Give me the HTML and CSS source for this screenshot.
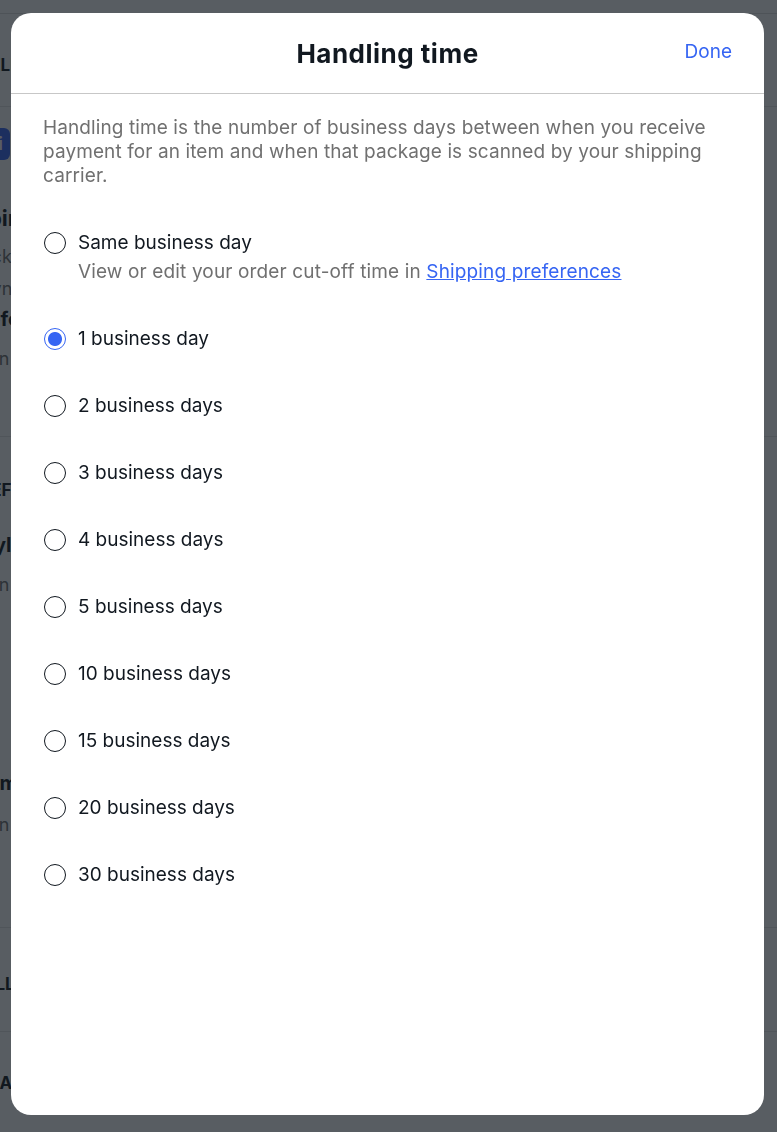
FILE: index.html
```html
<!DOCTYPE html>
<html lang="en">
<head>
<meta charset="utf-8">
<title>Handling time</title>
<link rel="stylesheet" href="styles.css">
</head>
<body>
<div class="page">
  <header class="page-header"></header>
  <section class="bg-section bg-top">
    <h2 class="bg-heading">DELIVERY</h2>
  </section>
  <section class="bg-section bg-first">
    <span class="bg-badge">i</span>
    <h3 class="bg-title bg-t1">Shipping</h3>
    <p class="bg-text bg-t2">Pack</p>
    <p class="bg-text bg-t3">Sync</p>
    <p class="bg-title2 bg-t4">Prefe</p>
    <p class="bg-text bg-t5">In</p>
  </section>
  <section class="bg-section bg-second">
    <h2 class="bg-heading">PREF</h2>
    <p class="bg-title2 bg-t6">Payl</p>
    <p class="bg-text bg-t7">In</p>
    <p class="bg-title2 bg-t8">Im</p>
    <p class="bg-text bg-t9">In</p>
  </section>
  <section class="bg-section bg-third">
    <h2 class="bg-heading">SELL</h2>
  </section>
  <section class="bg-section bg-fourth">
    <h2 class="bg-heading">DA</h2>
  </section>
</div>

<div class="overlay"></div>

<div class="dialog" role="dialog" aria-labelledby="dlg-title">
  <div class="dialog-header">
    <h1 id="dlg-title" class="dialog-title">Handling time</h1>
    <button class="done-btn" type="button">Done</button>
  </div>
  <div class="dialog-body">
    <p class="intro">Handling time is the number of business days between when you receive payment for an item and when that package is scanned by your shipping carrier.</p>
    <div class="options">
      <label class="option">
        <input type="radio" name="ht" class="radio">
        <span class="opt-text">
          <span class="opt-label">Same business day</span>
          <span class="opt-sub">View or edit your order cut-off time in <a href="#" class="link">Shipping preferences</a></span>
        </span>
      </label>
      <label class="option">
        <input type="radio" name="ht" class="radio" checked>
        <span class="opt-text"><span class="opt-label">1 business day</span></span>
      </label>
      <label class="option">
        <input type="radio" name="ht" class="radio">
        <span class="opt-text"><span class="opt-label">2 business days</span></span>
      </label>
      <label class="option">
        <input type="radio" name="ht" class="radio">
        <span class="opt-text"><span class="opt-label">3 business days</span></span>
      </label>
      <label class="option">
        <input type="radio" name="ht" class="radio">
        <span class="opt-text"><span class="opt-label">4 business days</span></span>
      </label>
      <label class="option">
        <input type="radio" name="ht" class="radio">
        <span class="opt-text"><span class="opt-label">5 business days</span></span>
      </label>
      <label class="option">
        <input type="radio" name="ht" class="radio">
        <span class="opt-text"><span class="opt-label">10 business days</span></span>
      </label>
      <label class="option">
        <input type="radio" name="ht" class="radio">
        <span class="opt-text"><span class="opt-label">15 business days</span></span>
      </label>
      <label class="option">
        <input type="radio" name="ht" class="radio">
        <span class="opt-text"><span class="opt-label">20 business days</span></span>
      </label>
      <label class="option">
        <input type="radio" name="ht" class="radio">
        <span class="opt-text"><span class="opt-label">30 business days</span></span>
      </label>
    </div>
  </div>
</div>
</body>
</html>
```

FILE: styles.css
```css
* { box-sizing: border-box; }

html, body {
  margin: 0;
  padding: 0;
  height: 100%;
}

body {
  font-family: Inter, "Noto Sans", "Liberation Sans", sans-serif;
  color: #111820;
  background: #ffffff;
  overflow: hidden;
}

/* ---------- background page (under the overlay) ---------- */
.page {
  width: 777px;
  height: 1132px;
  background: #ffffff;
  display: flex;
  flex-direction: column;
  overflow: hidden;
}

.page-header {
  height: 14px;
  border-bottom: 1px solid #dcdcdc;
  flex: none;
}

.bg-section {
  border-bottom: 1px solid #e5e5e5;
  flex: none;
}

.bg-top { height: 93px; }
.bg-first { height: 330px; }
.bg-second { height: 491px; }
.bg-third { height: 104px; }
.bg-fourth { flex: 1; border-bottom: none; }

.bg-heading {
  margin: 0;
  font-size: 17px;
  font-weight: 700;
  line-height: 20px;
  white-space: nowrap;
}

.bg-top .bg-heading { padding-top: 41px; margin-left: -22px; }

.bg-badge {
  display: block;
  width: 24px;
  height: 32px;
  margin-top: 21px;
  margin-left: -14px;
  border-radius: 6px;
  background: #3665f3;
  color: #fff;
  font-weight: 700;
  font-size: 18px;
  line-height: 32px;
  text-align: right;
  padding-right: 7px;
}

.bg-title, .bg-title2, .bg-text {
  margin: 0;
  white-space: nowrap;
}
.bg-title { font-size: 22px; font-weight: 700; line-height: 26px; margin-top: 45px; margin-left: -60px; }
.bg-title2 { font-size: 20px; font-weight: 700; line-height: 24px; }
.bg-text { font-size: 18px; color: #707070; line-height: 24px; }
.bg-t2 { margin-top: 14px; margin-left: -30px; }
.bg-t3 { margin-top: 8px; margin-left: -20px; }
.bg-t4 { margin-top: 6px; margin-left: -32px; }
.bg-t5 { margin-top: 16px; margin-left: -6px; }
.bg-second .bg-heading { padding-top: 43px; margin-left: -31px; }
.bg-t6 { margin-top: 33px; margin-left: -30px; }
.bg-t7 { margin-top: 16px; margin-left: -6px; }
.bg-t8 { margin-top: 174px; margin-left: -6px; }
.bg-t9 { margin-top: 18px; margin-left: -6px; }
.bg-third .bg-heading { padding-top: 46px; margin-left: -26px; }
.bg-fourth .bg-heading { padding-top: 41px; margin-left: -12px; }

.overlay {
  position: fixed;
  inset: 0;
  background: rgba(17, 24, 32, 0.7);
}

/* ---------- dialog ---------- */
.dialog {
  position: fixed;
  left: 11px;
  top: 13px;
  width: 753px;
  height: 1102px;
  background: #ffffff;
  border-radius: 20px;
  display: flex;
  flex-direction: column;
  overflow: hidden;
}

.dialog-header {
  flex: none;
  height: 81px;
  border-bottom: 1px solid #c7c7c7;
  display: flex;
  align-items: center;
  justify-content: center;
  position: relative;
}

.dialog-title {
  margin: 0;
  font-size: 26px;
  font-weight: 700;
  letter-spacing: 0.5px;
  line-height: 32px;
  color: #111820;
  padding-top: 1px;
}

.done-btn {
  position: absolute;
  right: 32px;
  top: 27px;
  background: none;
  border: none;
  padding: 0;
  font-family: inherit;
  font-size: 19px;
  line-height: 24px;
  color: #3665f3;
  cursor: pointer;
}

.dialog-body {
  padding: 22px 32px 32px 32px;
}

.intro {
  margin: 0;
  font-size: 19px;
  letter-spacing: 0.1px;
  line-height: 24px;
  color: #707070;
}

.options {
  margin-top: 43px;
  display: flex;
  flex-direction: column;
  gap: 43px;
}

.option {
  display: flex;
  align-items: flex-start;
  cursor: pointer;
}

.radio {
  appearance: none;
  -webkit-appearance: none;
  margin: 1px 12px 0 1px;
  width: 22px;
  height: 22px;
  border: 1.5px solid #111820;
  border-radius: 50%;
  flex: none;
  background: #fff;
}

.radio:checked {
  border-color: #3665f3;
  background: radial-gradient(circle, #3665f3 0 6.5px, #ffffff 7.5px);
}

.opt-text {
  display: flex;
  flex-direction: column;
  gap: 5px;
}

.opt-label {
  font-size: 19px;
  line-height: 24px;
  color: #111820;
}

.opt-sub {
  font-size: 19px;
  letter-spacing: 0.14px;
  line-height: 24px;
  color: #707070;
}

.link {
  color: #3665f3;
  text-decoration: underline;
}
```
